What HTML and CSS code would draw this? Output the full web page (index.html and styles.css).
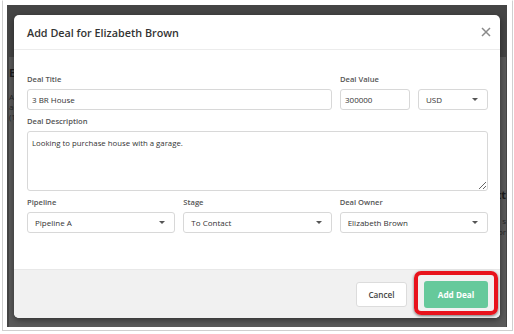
FILE: index.html
```html
<!DOCTYPE html>
<html>
<head>
<meta charset="utf-8">
<link rel="stylesheet" href="styles.css">
</head>
<body>
<div class="frame">
  <div class="screen">
    <div class="page">
      <div class="page-left">
        <div class="pl-title">El</div>
        <div class="pl-line">AC</div>
        <div class="pl-line">ac</div>
        <div class="pl-line">(1</div>
      </div>
      <div class="page-right">
        <div class="pr-title">tt</div>
        <div class="pr-line">s</div>
        <div class="pr-line">or</div>
      </div>
    </div>

    <div class="modal">
      <div class="modal-header">
        <div class="modal-title">Add Deal for Elizabeth Brown</div>
        <svg class="close" width="10" height="10" viewBox="0 0 10 10"><path d="M1 1L9 9M9 1L1 9" stroke="#8a8a8a" stroke-width="1.5" fill="none"/></svg>
      </div>
      <div class="modal-body">
        <div class="row row-top">
          <div class="field">
            <div class="label">Deal Title</div>
            <input class="input" type="text" value="3 BR House">
          </div>
          <div class="field">
            <div class="label">Deal Value</div>
            <input class="input" type="text" value="300000">
          </div>
          <div class="field">
            <div class="label">&nbsp;</div>
            <div class="select">USD</div>
          </div>
        </div>
        <div class="field">
          <div class="label">Deal Description</div>
          <textarea class="textarea">Looking to purchase house with a garage.</textarea>
        </div>
        <div class="row row-three">
          <div class="field">
            <div class="label">Pipeline</div>
            <div class="select">Pipeline A</div>
          </div>
          <div class="field">
            <div class="label">Stage</div>
            <div class="select">To Contact</div>
          </div>
          <div class="field">
            <div class="label">Deal Owner</div>
            <div class="select">Elizabeth Brown</div>
          </div>
        </div>
      </div>
      <div class="modal-footer">
        <button class="btn btn-cancel">Cancel</button>
        <button class="btn btn-add">Add Deal</button>
      </div>
    </div>

    <div class="highlight"></div>
  </div>
</div>
</body>
</html>
```

FILE: styles.css
```css
html, body {
  margin: 0;
  padding: 0;
  background: #ffffff;
  font-family: "Open Sans", "Liberation Sans", sans-serif;
}

.frame {
  margin-left: 2px;
  width: 511px;
  height: 331px;
  box-sizing: border-box;
  border: 1px solid #cfcfcf;
  border-top-color: #ffffff;
  padding: 4px 5px 3px 4px;
}

.screen {
  position: relative;
  width: 500px;
  height: 322px;
  background: #454545;
  overflow: hidden;
}

.page {
  display: flex;
  justify-content: space-between;
  margin: 52px 1px 0 2px;
  height: 270px;
  background: #5a5a5a;
}

.page-left {
  width: 20px;
  padding-top: 10px;
}

.pl-title {
  font-weight: 700;
  font-size: 11px;
  line-height: 12px;
  color: #1c1c1c;
  margin-bottom: 13px;
}

.pl-line {
  font-size: 8px;
  line-height: 10px;
  color: #262626;
}

.page-right {
  width: 14px;
  padding-top: 132px;
  display: flex;
  flex-direction: column;
  align-items: flex-end;
}

.pr-title {
  font-weight: 700;
  font-size: 11px;
  line-height: 12px;
  color: #1c1c1c;
  margin-bottom: 14px;
  white-space: nowrap;
}

.pr-line {
  font-size: 8px;
  line-height: 11px;
  color: #262626;
  white-space: nowrap;
}

/* Modal */
.modal {
  position: absolute;
  left: 7px;
  top: 10px;
  width: 486px;
  height: 303px;
  background: #ffffff;
  border-radius: 5px;
  overflow: hidden;
  display: flex;
  flex-direction: column;
  box-shadow: 0 2px 6px rgba(0, 0, 0, 0.45);
}

.modal-header {
  height: 35px;
  box-sizing: border-box;
  border-bottom: 1px solid #ececec;
  display: flex;
  align-items: center;
  justify-content: space-between;
  padding: 0 9px 0 13px;
  flex-shrink: 0;
}

.modal-title {
  font-size: 10.8px;
  font-weight: 600;
  color: #333333;
}

.close {
  display: block;
}

.modal-body {
  flex: 1;
  padding: 24px 12px 0 13px;
  display: flex;
  flex-direction: column;
  gap: 6px;
}

.row {
  display: grid;
  gap: 8px;
}

.row-top {
  grid-template-columns: 1fr 70px 70px;
}

.row-three {
  grid-template-columns: 1fr 1fr 1fr;
}

.field {
  display: flex;
  flex-direction: column;
}

.label {
  font-size: 7.6px;
  font-weight: 600;
  line-height: 11px;
  color: #555555;
  margin-bottom: 4px;
}

.input {
  height: 21px;
  box-sizing: border-box;
  border: 1px solid #d8d8d8;
  border-radius: 3px;
  padding: 0 4px;
  font-family: "Open Sans", "Liberation Sans", sans-serif;
  font-size: 8px;
  color: #333333;
  outline: none;
  width: 100%;
}

.textarea {
  height: 60px;
  box-sizing: border-box;
  border: 1px solid #d8d8d8;
  border-radius: 3px;
  padding: 6px 4px;
  font-family: "Open Sans", "Liberation Sans", sans-serif;
  font-size: 7.8px;
  line-height: 11px;
  color: #333333;
  outline: none;
  width: 100%;
}

.select {
  position: relative;
  height: 21px;
  box-sizing: border-box;
  border: 1px solid #d8d8d8;
  border-radius: 3px;
  padding: 0 7px;
  font-size: 8px;
  line-height: 19px;
  color: #333333;
}

.select::after {
  content: "";
  position: absolute;
  right: 9px;
  top: 8px;
  border-left: 3px solid transparent;
  border-right: 3px solid transparent;
  border-top: 3px solid #555555;
}

.modal-footer {
  height: 49px;
  box-sizing: border-box;
  background: #f1f1f1;
  border-top: 1px solid #e8e8e8;
  display: flex;
  justify-content: flex-end;
  align-items: center;
  gap: 17px;
  padding-right: 12px;
  flex-shrink: 0;
}

.btn {
  font-family: "Open Sans", "Liberation Sans", sans-serif;
  font-size: 8.2px;
  font-weight: 600;
  border-radius: 3px;
  cursor: pointer;
  padding: 0;
}

.btn-cancel {
  width: 51px;
  height: 25px;
  background: #ffffff;
  border: 1px solid #dcdcdc;
  color: #444444;
}

.btn-add {
  width: 64px;
  height: 27px;
  background: #66c99b;
  border: none;
  color: #ffffff;
  font-weight: 700;
}

.highlight {
  position: absolute;
  left: 407px;
  top: 266px;
  width: 84px;
  height: 44px;
  box-sizing: border-box;
  border: 4px solid #e8131c;
  border-radius: 7px;
  box-shadow: 0 1px 3px rgba(0, 0, 0, 0.55);
}
```
